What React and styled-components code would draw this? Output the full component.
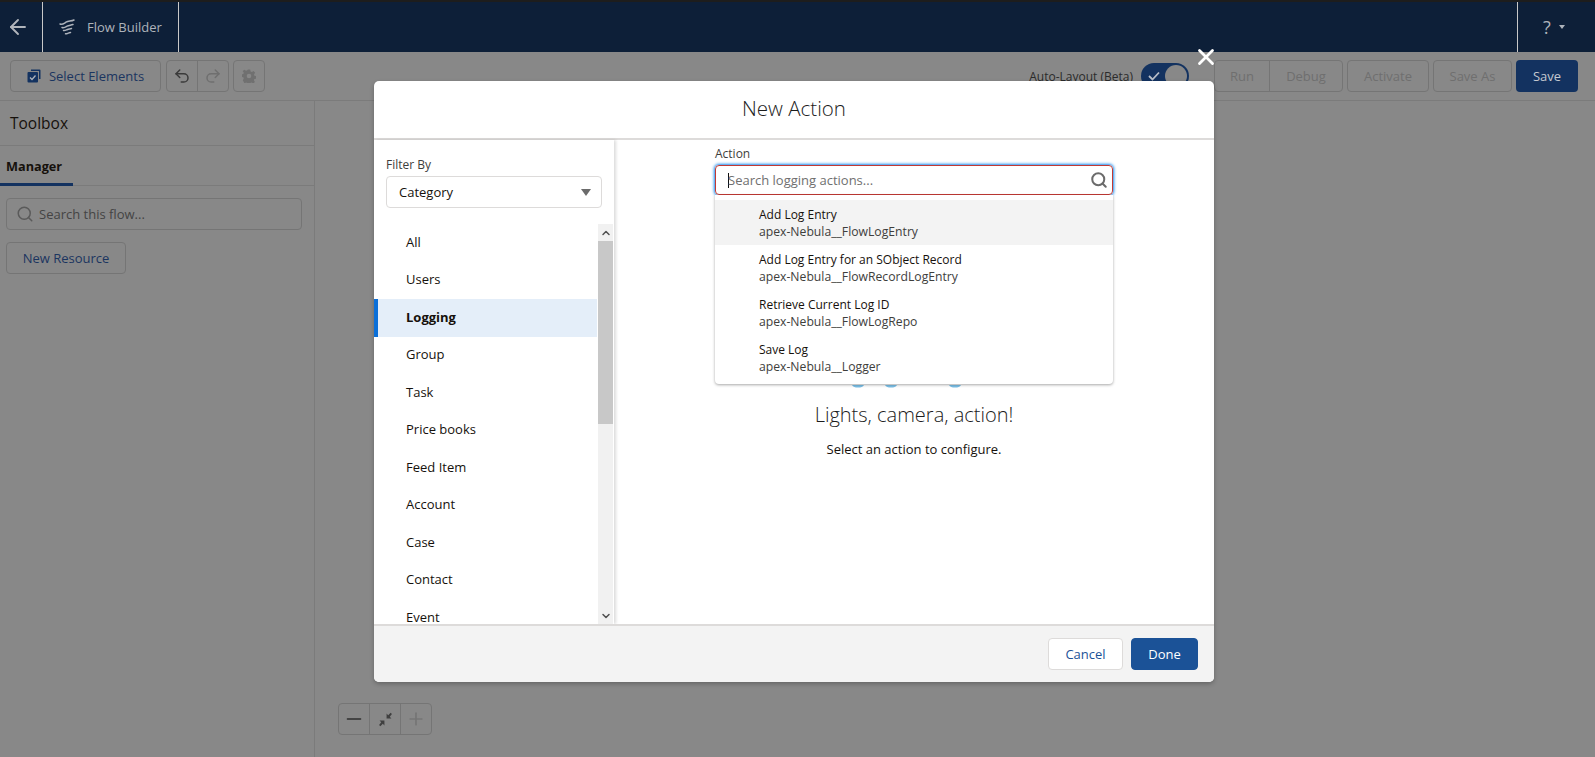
import React from "react";
import styled, { createGlobalStyle } from "styled-components";
import { ArrowLeft, ChevronDown, ChevronUp, Minus, Plus, Redo2, Search, Undo2, X } from "lucide-react";

const GlobalStyle = createGlobalStyle`
  html, body {
    margin: 0;
    height: 100%;
    overflow: hidden;
    font-family: "Open Sans", "Noto Sans", sans-serif;
    font-size: 13px;
    color: #16110c;
  }
  #root { height: 100%; }
  * { box-sizing: border-box; }
`;

const Page = styled.div`
  position: relative;
  height: 757px;
  display: flex;
  flex-direction: column;
  background: #888888;
`;

const TopBar = styled.header`
  height: 52px;
  display: flex;
  background: #0d1f38;
  border-top: 2px solid #1d1d1d;
  color: #aeb3bb;
`;

const BackCell = styled.div`
  width: 43px;
  display: flex;
  align-items: center;
  justify-content: center;
  border-right: 1px solid #c8c8c8;
  color: #b0b4bb;
  padding-right: 6px;
`;

const TitleCell = styled.div`
  width: 136px;
  display: flex;
  align-items: center;
  gap: 12px;
  padding-left: 16px;
  border-right: 1px solid #c8c8c8;
  font-size: 13px;
`;

const HelpCell = styled.div`
  margin-left: auto;
  width: 78px;
  display: flex;
  align-items: center;
  gap: 8px;
  padding-left: 25px;
  border-left: 1px solid #c8c8c8;
  font-size: 18px;
  &::after {
    content: "";
    border: 3px solid transparent;
    border-top: 4px solid #aeb3bb;
    margin-top: 3px;
  }
`;

const Toolbar = styled.div`
  height: 49px;
  display: flex;
  align-items: center;
  padding: 0 17px 0 10px;
  gap: 5px;
  border-bottom: 1px solid #7b7b7b;
`;

const ToolButton = styled.div`
  height: 32px;
  width: ${(p) => (p.$width ? `${p.$width}px` : "auto")};
  display: flex;
  align-items: center;
  justify-content: center;
  gap: 8px;
  font-size: 13px;
  white-space: nowrap;
  border: 1px solid #757575;
  border-radius: 4px;
  color: ${(p) => p.$color || "#1b3560"};
`;

const GearButton = styled(ToolButton)`
  margin-left: -1px;
`;

const ToolGroup = styled.div`
  display: flex;
  & > div { border-radius: 0; margin-left: -1px; }
  & > div:first-child { border-radius: 4px 0 0 4px; margin-left: 0; }
  & > div:last-child { border-radius: 0 4px 4px 0; }
`;

const ToolRight = styled.div`
  margin-left: auto;
  display: flex;
  align-items: center;
  gap: 4px;
`;

const SaveButton = styled.div`
  width: 62px;
  height: 32px;
  display: flex;
  align-items: center;
  justify-content: center;
  border-radius: 4px;
  background: #133260;
  color: #c4c9d0;
`;

const ToggleRow = styled.div`
  display: flex;
  align-items: center;
  gap: 8px;
  margin-right: 21px;
  font-size: 12px;
  color: #2b2b2b;
`;

const Toggle = styled.div`
  width: 48px;
  height: 26px;
  padding: 2px 2px 2px 6px;
  display: flex;
  align-items: center;
  justify-content: space-between;
  background: #133260;
  border-radius: 13px;
  color: #b8bec8;
  &::after {
    content: "";
    width: 22px;
    height: 22px;
    border-radius: 50%;
    background: #888888;
  }
`;

const Workspace = styled.div`
  position: relative;
  flex: 1;
  display: flex;
`;

const Sidebar = styled.aside`
  width: 315px;
  border-right: 1px solid #7b7b7b;
`;

const SidebarTitle = styled.div`
  height: 45px;
  display: flex;
  align-items: center;
  padding-left: 10px;
  font-size: 15.5px;
  border-bottom: 1px solid #7b7b7b;
`;

const TabRow = styled.div`
  height: 40px;
  border-bottom: 1px solid #7b7b7b;
`;

const Tab = styled.div`
  width: 73px;
  height: 40px;
  padding: 11px 0 0 6px;
  font-weight: 700;
  font-size: 12.7px;
  border-bottom: 3px solid #133260;
`;

const FlowSearch = styled.div`
  width: 296px;
  height: 32px;
  margin: 12px 0 0 6px;
  display: flex;
  align-items: center;
  gap: 5px;
  padding-left: 9px;
  border: 1px solid #757575;
  border-radius: 4px;
  color: #444444;
`;

const NewResource = styled(ToolButton)`
  margin: 12px 0 0 6px;
`;

const ZoomControls = styled(ToolGroup)`
  position: absolute;
  left: 338px;
  bottom: 22px;
`;

const ZoomButton = styled(ToolButton)`
  color: ${(p) => p.$color || "#444444"};
`;

const Modal = styled.div`
  position: absolute;
  left: 374px;
  top: 81px;
  width: 840px;
  height: 601px;
  display: flex;
  flex-direction: column;
  background: #ffffff;
  border-radius: 5px;
  box-shadow: 0 2px 4px rgba(0, 0, 0, 0.25);
`;

const CloseIcon = styled(X)`
  position: absolute;
  top: -37px;
  right: -5px;
  color: #ffffff;
`;

const ModalHeader = styled.div`
  height: 59px;
  padding-bottom: 3px;
  display: flex;
  align-items: center;
  justify-content: center;
  font-size: 20.5px;
  font-weight: 300;
  color: #1c1c1c;
  border-bottom: 2px solid #dddbda;
`;

const ModalBody = styled.div`
  height: 484px;
  display: flex;
`;

const FilterPane = styled.div`
  width: 240px;
  display: flex;
  flex-direction: column;
  box-shadow: 2px 0 3px rgba(0, 0, 0, 0.14);
`;

const FilterField = styled.div`
  padding: 17px 12px 16px 12px;
`;

const FieldLabel = styled.div`
  font-size: 12px;
  line-height: 16px;
  color: #3e3e3c;
  margin-bottom: 3px;
`;

const SelectBox = styled.div`
  height: 32px;
  display: flex;
  align-items: center;
  justify-content: space-between;
  padding: 0 10px 0 12px;
  border: 1px solid #dddbda;
  border-radius: 4px;
  &::after {
    content: "";
    border: 5px solid transparent;
    border-top: 7px solid #6b6b6b;
    border-bottom: 0;
  }
`;

const ListWrap = styled.div`
  flex: 1;
  min-height: 0;
  display: flex;
`;

const CategoryList = styled.div`
  flex: 1;
`;

const CategoryRow = styled.div`
  height: 37.5px;
  display: flex;
  align-items: center;
  line-height: 14px;
  padding-bottom: 2px;
  padding-left: ${(p) => (p.$active ? 28 : 32)}px;
  font-weight: ${(p) => (p.$active ? 700 : 400)};
  background: ${(p) => (p.$active ? "#e4eef9" : "transparent")};
  border-left: ${(p) => (p.$active ? "4px solid #0b6fd8" : "0")};
  /* the last row runs out of the visible part of the list */
  &:last-child {
    height: 25px;
    align-items: flex-start;
    padding-top: 10.5px;
    padding-bottom: 0;
  }
`;

const Scrollbar = styled.div`
  width: 15px;
  margin: 0 1px;
  display: flex;
  flex-direction: column;
  align-items: center;
  background: #f1f1f1;
  color: #505050;
`;

const ScrollThumb = styled.div`
  width: 100%;
  height: 183px;
  background: #c8c8c8;
`;

const ScrollEnd = styled.div`
  height: 17px;
  display: flex;
  align-items: center;
  justify-content: center;
`;

const ScrollSpacer = styled.div`
  flex: 1;
`;

const ActionPane = styled.div`
  flex: 1;
  padding: 6px 101px 0 101px;
`;

const Combobox = styled.div`
  position: relative;
`;

const SearchBox = styled.div`
  height: 30px;
  display: flex;
  align-items: center;
  justify-content: space-between;
  padding: 0 4px 0 12px;
  border: 1px solid #c23934;
  border-radius: 4px;
  box-shadow: 0 0 3px 1px #1589ee;
  color: #6f6f6f;
`;

const Caret = styled.span`
  display: inline-block;
  width: 1px;
  height: 15px;
  margin-right: -1px;
  background: #111111;
  vertical-align: -3px;
`;

const Dropdown = styled.div`
  position: absolute;
  left: 0;
  right: 0;
  top: 30px;
  height: 189px;
  padding-top: 5px;
  background: #ffffff;
  border-radius: 0 0 4px 4px;
  box-shadow: 0 1px 3px rgba(0, 0, 0, 0.35);
  z-index: 2;
`;

const Option = styled.div`
  height: 45px;
  padding: 6px 0 0 44px;
  background: ${(p) => (p.$hover ? "#f3f3f3" : "transparent")};
`;

const OptionTitle = styled.div`
  font-size: 12px;
  line-height: 17px;
`;

const OptionName = styled.div`
  font-size: 12.2px;
  line-height: 17px;
  color: #3e3e3c;
`;

const EmptyState = styled.div`
  margin-top: 190px;
  display: flex;
  flex-direction: column;
  align-items: center;
`;

const Slivers = styled.svg`
  display: block;
  margin-right: 15px;
`;

const EmptyTitle = styled.div`
  margin-top: 15px;
  font-size: 20px;
  line-height: 24px;
  font-weight: 300;
  color: #1c1c1c;
`;

const EmptyText = styled.div`
  margin-top: 13px;
  font-size: 13px;
  line-height: 18px;
`;

const ModalFooter = styled.div`
  flex: 1;
  display: flex;
  align-items: center;
  justify-content: flex-end;
  gap: 8px;
  padding-right: 16px;
  background: #f3f3f3;
  border-top: 2px solid #dddbda;
  border-radius: 0 0 5px 5px;
`;

const CancelButton = styled.div`
  width: 75px;
  height: 32px;
  display: flex;
  align-items: center;
  justify-content: center;
  background: #ffffff;
  border: 1px solid #dddbda;
  border-radius: 4px;
  color: #1b5297;
`;

const DoneButton = styled(CancelButton)`
  width: 67px;
  background: #1b5297;
  border-color: #1b5297;
  color: #ffffff;
`;

const FlowIcon = () => (
  <svg width="16" height="16" viewBox="0 0 16 16" fill="none" stroke="#aeb3bb" strokeWidth="1.5" strokeLinecap="round">
    <path d="M1 5c2.500.8 4-.6 6-1.800C9.500 1.800 12 2.400 15 1" />
    <path d="M3 8.500c2 .6 3.500-.4 5-1.300 1.800-1 3.500-.9 6-1.700" />
    <path d="M4.500 11.500c1.500.4 2.500-.4 4-1 1.300-.5 2.500-.5 4-1" />
    <path d="M6.500 14.800c1 .2 1.800-.3 2.800-.7.900-.3 1.500-.4 2.200-.5" />
  </svg>
);

const ElementsIcon = () => (
  <svg width="14" height="14" viewBox="0 0 14 14">
    <path d="M4 0.500h8.500a1 1 0 0 1 1 1V10h-1.500V2H4z" fill="#133260" />
    <rect x="0.500" y="3" width="10.500" height="10.500" rx="1" fill="#133260" />
    <path d="M3 8.500l2 2 3.500-4" fill="none" stroke="#aeb3bb" strokeWidth="1.300" />
  </svg>
);

const GearIcon = () => (
  <svg width="14" height="14" viewBox="0 0 14 14" fill="#707070">
    <path fillRule="evenodd" d="M5.800.500h2.400l.4 1.900 1.300.6 1.700-1 1.500 1.800-1.100 1.600.4 1.300 1.900.5v2.400l-1.900.4-.5 1.300 1 1.600-1.700 1.500-1.600-1-1.300.5-.4 1.900H5.800l-.4-1.900-1.300-.5-1.600 1L.8 11.200l1-1.600-.5-1.300-1.800-.4V5.500l1.900-.5.4-1.300-1.100-1.600L2.300 .8l1.700 1 1.300-.6zM7 4.700a2.300 2.300 0 1 0 0 4.600 2.300 2.300 0 0 0 0-4.600z" />
  </svg>
);

const ContractIcon = () => (
  <svg width="15" height="15" viewBox="0 0 14 14" fill="#3f3f3f">
    <path d="M13 1.800L11.800.600 9.500 3 8 1.500V6h4.500L11 4.500z" />
    <path d="M1 12.200l1.200 1.200L4.500 11 6 12.500V8H1.500L3 9.500z" />
  </svg>
);

const categories = ["All", "Users", "Logging", "Group", "Task", "Price books", "Feed Item", "Account", "Case", "Contact", "Event"];

const actions = [
  { title: "Add Log Entry", name: "apex-Nebula__FlowLogEntry" },
  { title: "Add Log Entry for an SObject Record", name: "apex-Nebula__FlowRecordLogEntry" },
  { title: "Retrieve Current Log ID", name: "apex-Nebula__FlowLogRepo" },
  { title: "Save Log", name: "apex-Nebula__Logger" },
];

export default function App() {
  return (
    <Page>
      <GlobalStyle />
      <TopBar>
        <BackCell>
          <ArrowLeft size={24} strokeWidth={1.9} />
        </BackCell>
        <TitleCell>
          <FlowIcon />
          Flow Builder
        </TitleCell>
        <HelpCell>?</HelpCell>
      </TopBar>
      <Toolbar>
        <ToolButton $width={151}>
          <ElementsIcon />
          Select Elements
        </ToolButton>
        <ToolGroup>
          <ToolButton $width={32} $color="#3a3a3a">
            <Undo2 size={18} />
          </ToolButton>
          <ToolButton $width={32} $color="#6f6f6f">
            <Redo2 size={18} />
          </ToolButton>
        </ToolGroup>
        <GearButton $width={32}>
          <GearIcon />
        </GearButton>
        <ToolRight>
          <ToggleRow>
            Auto-Layout (Beta)
            <Toggle>
              <svg width="14" height="12" viewBox="0 0 14 12" fill="none" stroke="currentColor" strokeWidth="1.800">
                <path d="M2 6l3.500 3.500L12 2.500" />
              </svg>
            </Toggle>
          </ToggleRow>
          <ToolGroup>
            <ToolButton $width={56} $color="#6f6f6f">Run</ToolButton>
            <ToolButton $width={74} $color="#6f6f6f">Debug</ToolButton>
          </ToolGroup>
          <ToolButton $width={82} $color="#6f6f6f">Activate</ToolButton>
          <ToolButton $width={79} $color="#6f6f6f">Save As</ToolButton>
          <SaveButton>Save</SaveButton>
        </ToolRight>
      </Toolbar>
      <Workspace>
        <Sidebar>
          <SidebarTitle>Toolbox</SidebarTitle>
          <TabRow>
            <Tab>Manager</Tab>
          </TabRow>
          <FlowSearch>
            <Search size={18} color="#5a5a5a" />
            Search this flow...
          </FlowSearch>
          <NewResource $width={120}>New Resource</NewResource>
        </Sidebar>
        <ZoomControls>
          <ZoomButton $width={32}>
            <Minus size={22} />
          </ZoomButton>
          <ZoomButton $width={32}>
            <ContractIcon />
          </ZoomButton>
          <ZoomButton $width={32} $color="#757575">
            <Plus size={20} />
          </ZoomButton>
        </ZoomControls>
      </Workspace>
      <Modal>
        <CloseIcon size={26} strokeWidth={2.6} />
        <ModalHeader>New Action</ModalHeader>
        <ModalBody>
          <FilterPane>
            <FilterField>
              <FieldLabel>Filter By</FieldLabel>
              <SelectBox>Category</SelectBox>
            </FilterField>
            <ListWrap>
              <CategoryList>
                {categories.map((c) => (
                  <CategoryRow key={c} $active={c === "Logging"}>
                    {c}
                  </CategoryRow>
                ))}
              </CategoryList>
              <Scrollbar>
                <ScrollEnd>
                  <ChevronUp size={12} strokeWidth={3} />
                </ScrollEnd>
                <ScrollThumb />
                <ScrollSpacer />
                <ScrollEnd>
                  <ChevronDown size={12} strokeWidth={3} />
                </ScrollEnd>
              </Scrollbar>
            </ListWrap>
          </FilterPane>
          <ActionPane>
            <FieldLabel>Action</FieldLabel>
            <Combobox>
              <SearchBox>
                <span>
                  <Caret />
                  Search logging actions...
                </span>
                <Search size={18} color="#6b6b6b" strokeWidth={2.7} />
              </SearchBox>
              <Dropdown>
                {actions.map((a, i) => (
                  <Option key={a.name} $hover={i === 0}>
                    <OptionTitle>{a.title}</OptionTitle>
                    <OptionName>{a.name}</OptionName>
                  </Option>
                ))}
              </Dropdown>
            </Combobox>
            <EmptyState>
              <Slivers width="110" height="3" viewBox="0 0 110 3" fill="#7cc1e8">
                <path d="M0 0h12c-1 2-3 2.500-6 2.500S1 2 0 0z" />
                <path d="M33 0h12c-1 2-3 2.500-6 2.500S34 2 33 0z" />
                <path d="M97 0h12c-1 2-3 2.500-6 2.500S98 2 97 0z" />
              </Slivers>
              <EmptyTitle>Lights, camera, action!</EmptyTitle>
              <EmptyText>Select an action to configure.</EmptyText>
            </EmptyState>
          </ActionPane>
        </ModalBody>
        <ModalFooter>
          <CancelButton>Cancel</CancelButton>
          <DoneButton>Done</DoneButton>
        </ModalFooter>
      </Modal>
    </Page>
  );
}
